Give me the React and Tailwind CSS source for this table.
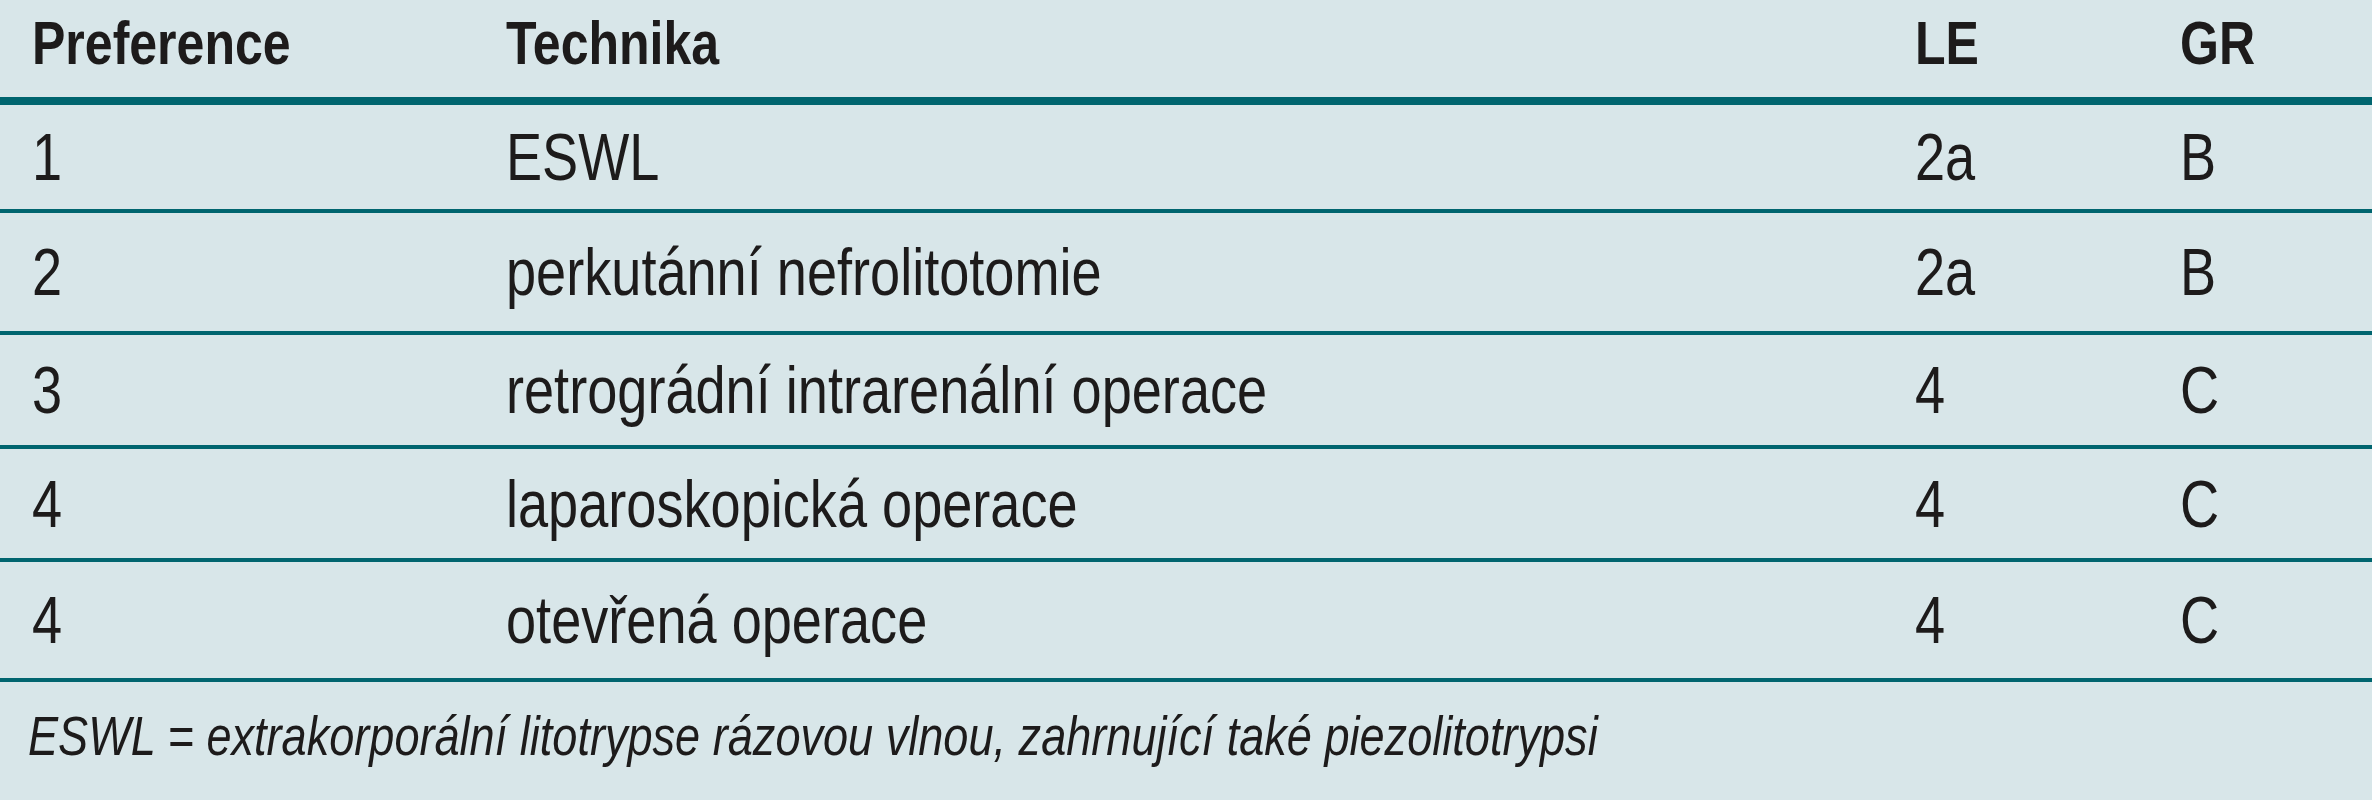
import React from "react";

const rows = [
  { pref: "1", tech: "ESWL", le: "2a", gr: "B", h: "h-[104px]" },
  { pref: "2", tech: "perkutánní nefrolitotomie", le: "2a", gr: "B", h: "h-[118px]" },
  { pref: "3", tech: "retrográdní intrarenální operace", le: "4", gr: "C", h: "h-[110px]" },
  { pref: "4", tech: "laparoskopická operace", le: "4", gr: "C", h: "h-[109px]" },
  { pref: "4", tech: "otevřená operace", le: "4", gr: "C", h: "h-[116px]" },
];

// narrow look: Liberation Sans squeezed to the width of Arial Narrow
const Narrow = ({ children }) => (
  <span className="inline-block whitespace-nowrap origin-left scale-x-[0.82]">{children}</span>
);

const App = () => {
  return (
    <div className="w-[2372px] h-[800px] bg-[#d8e6e9] text-[#1d1b1b] font-['Liberation_Sans',Arial,sans-serif] overflow-hidden">
      <div className="grid grid-cols-[474px_1409px_265px_1fr] pl-[32px] h-[105px] pb-[10px] items-center border-b-[8px] border-[#00656f] text-[61px] font-bold leading-none">
        <div><Narrow>Preference</Narrow></div>
        <div><Narrow>Technika</Narrow></div>
        <div><Narrow>LE</Narrow></div>
        <div><Narrow>GR</Narrow></div>
      </div>
      {rows.map((r, i) => (
        <div
          key={i}
          className={`grid grid-cols-[474px_1409px_265px_1fr] pl-[32px] items-center border-b-[4px] border-[#00656f] text-[66px] leading-none box-content ${r.h}`}
        >
          <div><Narrow>{r.pref}</Narrow></div>
          <div><Narrow>{r.tech}</Narrow></div>
          <div><Narrow>{r.le}</Narrow></div>
          <div><Narrow>{r.gr}</Narrow></div>
        </div>
      ))}
      <div className="pl-[28px] pt-[27px] text-[55px] italic leading-none">
        <Narrow>ESWL = extrakorporální litotrypse rázovou vlnou, zahrnující také piezolitotrypsi</Narrow>
      </div>
    </div>
  );
};

export default App;
